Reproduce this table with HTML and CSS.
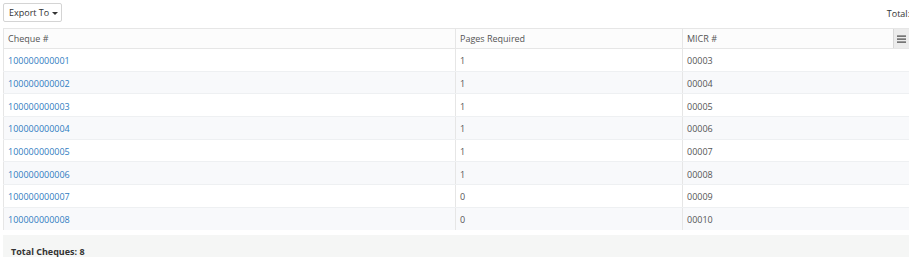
FILE: index.html
```html
<!DOCTYPE html>
<html>
<head>
<meta charset="utf-8">
<link rel="stylesheet" href="styles.css">
</head>
<body>
<div class="toolbar">
  <button class="export-btn">Export To <span class="caret"></span></button>
  <span class="total-label">Total:</span>
</div>
<div class="grid">
  <table class="grid-table">
    <thead>
      <tr>
        <th class="col-cheque">Cheque #</th>
        <th class="col-pages">Pages Required</th>
        <th class="col-micr">MICR #<span class="menu-btn"><svg width="9" height="8" viewBox="0 0 9 8"><rect x="0" y="0.5" width="9" height="1.2" fill="#444"/><rect x="0" y="3.5" width="9" height="1.2" fill="#444"/><rect x="0" y="6.5" width="9" height="1.2" fill="#444"/></svg></span></th>
      </tr>
    </thead>
    <tbody>
      <tr><td><a href="#">100000000001</a></td><td>1</td><td>00003</td></tr>
      <tr class="alt"><td><a href="#">100000000002</a></td><td>1</td><td>00004</td></tr>
      <tr><td><a href="#">100000000003</a></td><td>1</td><td>00005</td></tr>
      <tr class="alt"><td><a href="#">100000000004</a></td><td>1</td><td>00006</td></tr>
      <tr><td><a href="#">100000000005</a></td><td>1</td><td>00007</td></tr>
      <tr class="alt"><td><a href="#">100000000006</a></td><td>1</td><td>00008</td></tr>
      <tr><td><a href="#">100000000007</a></td><td>0</td><td>00009</td></tr>
      <tr class="alt"><td><a href="#">100000000008</a></td><td>0</td><td>00010</td></tr>
    </tbody>
  </table>
  <div class="footer">Total Cheques: 8</div>
</div>
</body>
</html>
```
FILE: styles.css
```css
html, body {
  margin: 0;
  padding: 0;
  background: #fff;
  font-family: "Open Sans", "DejaVu Sans", sans-serif;
  font-size: 9px;
  color: #555;
  overflow: hidden;
}
.toolbar {
  height: 28px;
  display: flex;
  align-items: flex-start;
  justify-content: space-between;
  padding-left: 3px;
  box-sizing: border-box;
}
.export-btn {
  margin-top: 3px;
  height: 19px;
  width: 59px;
  padding: 0 0 0 5px;
  text-align: left;
  border: 1px solid #d4d4d4;
  border-radius: 2px;
  background: #fff;
  font-family: inherit;
  font-size: 9px;
  color: #333;
  display: flex;
  align-items: center;
  gap: 3px;
  box-sizing: border-box;
}
.caret {
  width: 0;
  height: 0;
  border-left: 3px solid transparent;
  border-right: 3px solid transparent;
  border-top: 3px solid #333;
  margin-top: 1px;
}
.total-label {
  margin-top: 7px;
  margin-right: -1px;
  color: #333;
}
.grid {
  margin-left: 3px;
  width: 910px;
}
.grid-table {
  width: 100%;
  border-collapse: collapse;
  table-layout: fixed;
  border-left: 1px solid #e6e6e6;
  border-top: 1px solid #e6e6e6;
}
.col-cheque { width: 452px; }
.col-pages { width: 227px; }
th {
  height: 20px;
  padding: 0 4px;
  text-align: left;
  font-weight: normal;
  background: #fcfcfc;
  color: #555;
  border-bottom: 1px solid #e6e6e6;
  border-right: 1px solid #e6e6e6;
  position: relative;
  box-sizing: border-box;
}
td {
  height: 22.67px;
  padding: 2px 4px 0;
  border-bottom: 1px solid #eef0f2;
  border-right: 1px solid #e6e6e6;
  box-sizing: border-box;
  color: #555;
}
tbody tr:last-child td { border-bottom: none; }
tr.alt td { background: #f8f9fb; }
a {
  color: #2f7cc1;
  text-decoration: none;
}
.menu-btn {
  position: absolute;
  top: 0;
  right: 3px;
  width: 15px;
  height: 19px;
  background: #ececec;
  border-left: 1px solid #d8d8d8;
  display: flex;
  align-items: center;
  justify-content: center;
}
.footer {
  margin-top: 5px;
  height: 22px;
  background: #f5f6f5;
  font-weight: bold;
  color: #333;
  padding-left: 8px;
  display: flex;
  align-items: flex-end;
  padding-bottom: 0;
  line-height: 10px;
  box-sizing: border-box;
}
```
